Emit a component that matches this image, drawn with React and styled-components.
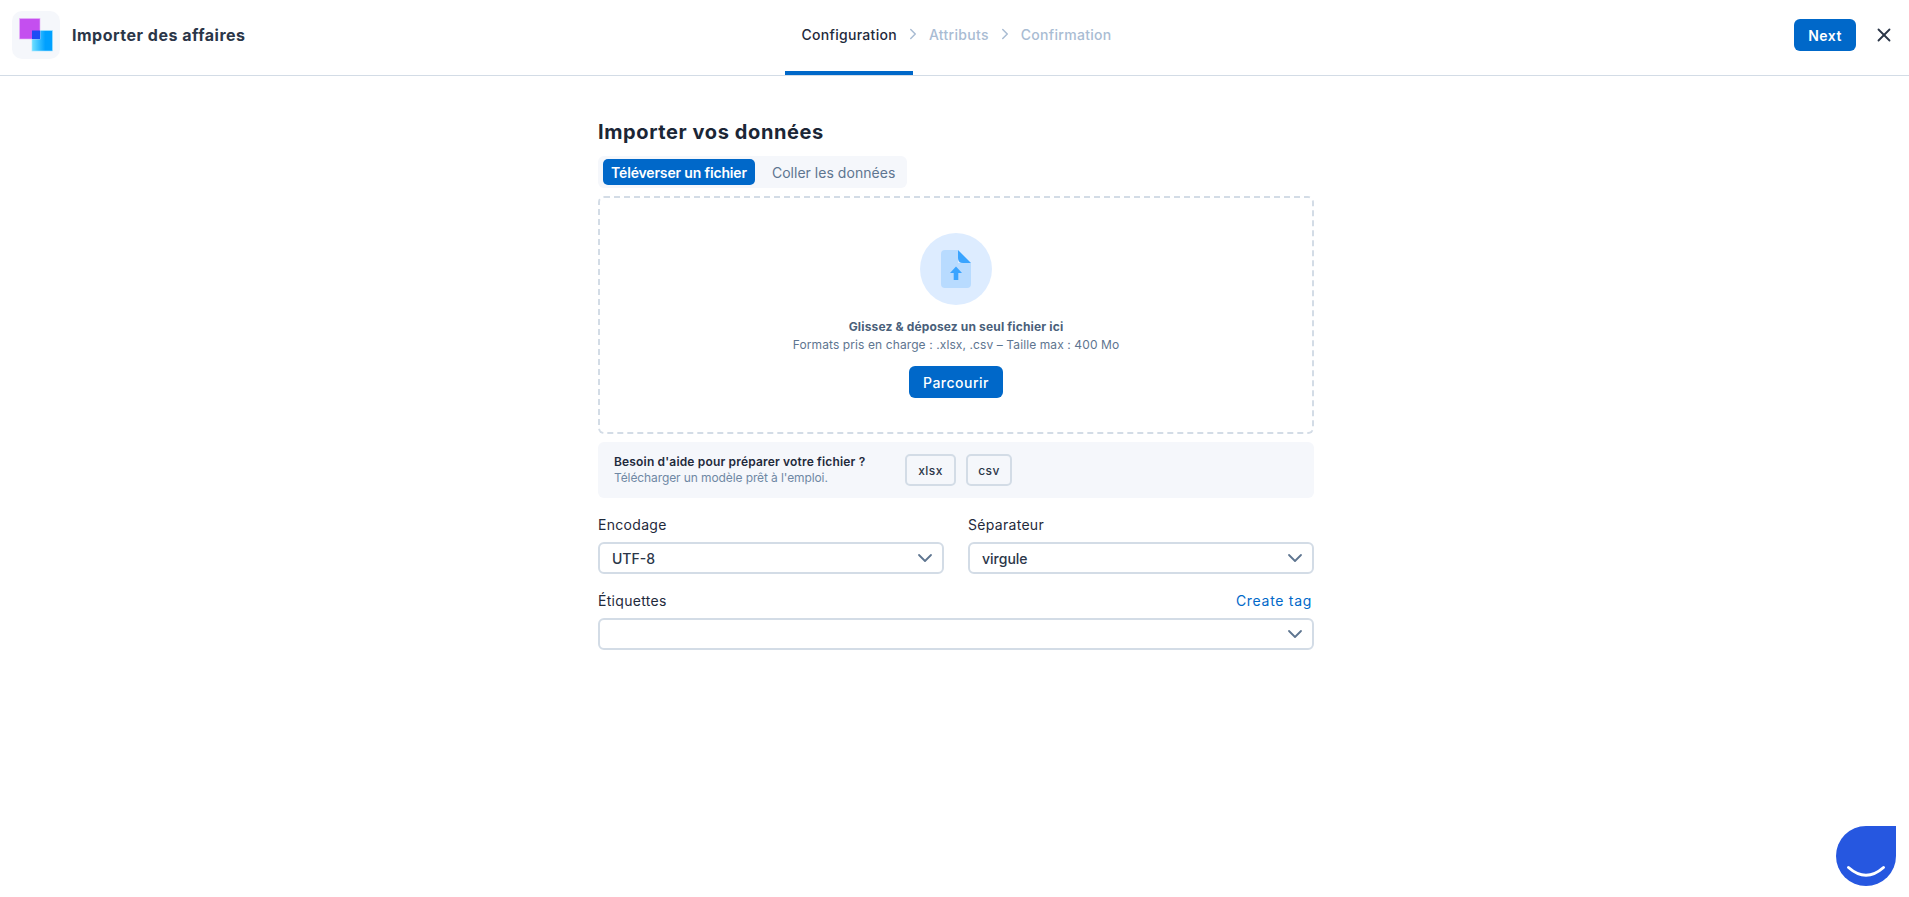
import styled, { createGlobalStyle } from "styled-components"
import { ChevronDown, ChevronRight, X } from "lucide-react"

const GlobalStyle = createGlobalStyle`
  html, body {
    margin: 0;
    padding: 0;
    background: #fff;
  }
  body {
    font-family: "Inter", "Noto Sans", sans-serif;
    color: #1f2a3c;
  }
  * {
    box-sizing: border-box;
  }
`

const Page = styled.div`
  height: 897px;
  position: relative;
  overflow: hidden;
`

const TopBar = styled.header`
  height: 76px;
  display: grid;
  grid-template-columns: 1fr auto 1fr;
  border-bottom: 1px solid #d3dce6;
  padding: 0 11px 0 12px;
`

const Brand = styled.div`
  display: flex;
  align-items: center;
  gap: 12px;
  height: 70px;
`

const LogoBox = styled.div`
  width: 48px;
  height: 48px;
  border-radius: 10px;
  background: #f5f7fb;
  display: flex;
  align-items: center;
  justify-content: center;
`

const BrandTitle = styled.h1`
  margin: 0;
  font-size: 16px;
  font-weight: 700;
  letter-spacing: 0.5px;
  color: #2b3648;
`

const Steps = styled.nav`
  display: flex;
  align-items: stretch;
  height: 75px;
  margin-left: -5px;
`

const Step = styled.div`
  display: flex;
  align-items: center;
  height: 75px;
  padding: 0 ${(p) => (p.$active ? "16px" : "8px")} 3px;
  margin-right: ${(p) => (p.$active ? "-8px" : "0")};
  font-size: 14px;
  font-weight: 500;
  letter-spacing: 0.3px;
  color: ${(p) => (p.$active ? "#1f2a3c" : "#a9bcd3")};
  border-bottom: 4px solid ${(p) => (p.$active ? "#0068c9" : "transparent")};
`

const StepArrow = styled.span`
  display: flex;
  align-items: center;
  height: 68px;
  margin: 0 -1px;
  color: #a9bcd3;
`

const TopActions = styled.div`
  display: flex;
  align-items: center;
  justify-content: flex-end;
  gap: 14px;
  height: 70px;
`

const NextButton = styled.button`
  width: 62px;
  height: 32px;
  border: 0;
  border-radius: 6px;
  background: #0068c9;
  color: #fff;
  font: 600 14px "Inter", sans-serif;
  letter-spacing: 0.5px;
`

const CloseButton = styled.button`
  width: 28px;
  height: 28px;
  padding: 0;
  border: 0;
  background: none;
  color: #2b3648;
  display: flex;
  align-items: center;
  justify-content: center;
`

const Content = styled.main`
  width: 716px;
  margin-left: 598px;
  padding-top: 43px;
`

const Heading = styled.h2`
  margin: 0 0 11px;
  font-size: 20px;
  line-height: 26px;
  font-weight: 700;
  color: #1b2636;
  letter-spacing: 0.6px;
`

const Tabs = styled.div`
  display: flex;
  width: 309px;
  height: 32px;
  padding: 3px 5px;
  gap: 9px;
  background: #f5f7fb;
  border-radius: 6px;
`

const Tab = styled.button`
  border: 0;
  border-radius: 5px;
  height: 26px;
  padding: 0 8px;
  font: ${(p) => (p.$active ? 600 : 400)} 14px "Inter", sans-serif;
  letter-spacing: ${(p) => (p.$active ? "-0.15px" : "0.03px")};
  background: ${(p) => (p.$active ? "#0068c9" : "transparent")};
  color: ${(p) => (p.$active ? "#fff" : "#5e7590")};
  white-space: nowrap;
`

const DropZone = styled.section`
  margin-top: 8px;
  height: 238px;
  border: 2px dashed #d3dce6;
  border-radius: 6px;
  display: flex;
  flex-direction: column;
  align-items: center;
  padding-top: 35px;
`

const FileCircle = styled.div`
  width: 72px;
  height: 72px;
  border-radius: 50%;
  background: #ddecff;
  display: flex;
  align-items: center;
  justify-content: center;
  margin-bottom: 13px;
`

const DropTitle = styled.p`
  margin: 0;
  font-size: 12px;
  line-height: 18px;
  font-weight: 700;
  letter-spacing: 0.15px;
  color: #4a5f7a;
`

const DropHint = styled.p`
  margin: 0 0 12px;
  font-size: 12px;
  line-height: 18px;
  letter-spacing: 0.1px;
  color: #5e7590;
`

const BrowseButton = styled.button`
  width: 94px;
  height: 32px;
  border: 0;
  border-radius: 6px;
  background: #0068c9;
  color: #fff;
  font: 500 14px "Inter", sans-serif;
  letter-spacing: 0.5px;
`

const HelpBar = styled.section`
  margin-top: 8px;
  height: 56px;
  background: #f5f7fb;
  border-radius: 6px;
  display: flex;
  align-items: center;
  padding: 0 16px;
`

const HelpText = styled.div`
  width: 291px;
`

const HelpTitle = styled.div`
  font-size: 12px;
  line-height: 16px;
  font-weight: 600;
  letter-spacing: 0.17px;
  color: #1f2a3c;
`

const HelpSub = styled.div`
  font-size: 12px;
  line-height: 16px;
  letter-spacing: -0.1px;
  color: #6f88a4;
`

const TemplateButton = styled.button`
  height: 32px;
  width: ${(p) => p.$width}px;
  margin-right: 10px;
  border: 2px solid #d3dce6;
  border-radius: 5px;
  background: #f5f7fb;
  color: #2b3648;
  font: 500 12px "Inter", sans-serif;
  letter-spacing: 0.4px;
`

const FormGrid = styled.div`
  margin-top: 16px;
  display: grid;
  grid-template-columns: 1fr 1fr;
  column-gap: 24px;
  row-gap: 16px;
`

const Field = styled.div`
  grid-column: ${(p) => (p.$wide ? "1 / -1" : "auto")};
`

const LabelRow = styled.div`
  display: flex;
  justify-content: space-between;
  align-items: center;
  height: 20px;
  margin-bottom: 8px;
  padding-right: 2px;
`

const Label = styled.label`
  font-size: 14px;
  letter-spacing: 0.3px;
  color: #1f2a3c;
`

const CreateLink = styled.a`
  font-size: 14px;
  color: #0068c9;
  letter-spacing: 0.7px;
`

const Select = styled.div`
  height: 32px;
  border: 2px solid #d3dce6;
  border-radius: 6px;
  display: flex;
  align-items: center;
  justify-content: space-between;
  padding: 0 5px 0 12px;
  font-size: 14px;
  font-weight: 500;
  color: #2b3648;
  svg {
    color: #5e7590;
  }
`

const ChatBubble = styled.div`
  position: absolute;
  right: 13px;
  bottom: 11px;
  width: 60px;
  height: 60px;
  background: #2657e0;
  border-radius: 50% 0 50% 50%;
  display: flex;
  align-items: flex-end;
  justify-content: center;
`

const ImportLogo = () => (
  <svg width="36" height="36" viewBox="0 0 36 36">
    <defs>
      <linearGradient id="logoBlue" x1="0" x2="1" y1="0" y2="0">
        <stop offset="0" stopColor="#6fe0ff" />
        <stop offset="0.65" stopColor="#00a0ff" />
      </linearGradient>
    </defs>
    <rect x="14" y="13.5" width="20.5" height="20.5" fill="url(#logoBlue)" stroke="#a4e5ff" strokeWidth="0.6" />
    <rect x="1.5" y="1.5" width="20.5" height="20.5" fill="#c44fef" stroke="#e6b4f8" strokeWidth="0.6" />
    <rect x="14" y="13.5" width="8" height="8.5" fill="#1c4cf5" />
  </svg>
)

const FileUpIcon = () => (
  <svg width="30" height="38" viewBox="0 0 30 38">
    <path d="M4 0H17V13H30V34Q30 38 26 38H4Q0 38 0 34V4Q0 0 4 0Z" fill="#b8dbff" />
    <path d="M17 0L30 13H22Q17 13 17 8Z" fill="#3aa4ff" />
    <path d="M15 16.5L21 23H17.3V30H12.7V23H9Z" fill="#3aa4ff" />
  </svg>
)

const SmileIcon = () => (
  <svg width="40" height="24" viewBox="0 0 40 24">
    <path d="M2.5 5.5Q20 21 37.5 5.5" fill="none" stroke="#fff" strokeWidth="3" strokeLinecap="round" />
  </svg>
)

const App = () => {
  return (
    <Page>
      <GlobalStyle />
      <TopBar>
        <Brand>
          <LogoBox>
            <ImportLogo />
          </LogoBox>
          <BrandTitle>Importer des affaires</BrandTitle>
        </Brand>
        <Steps>
          <Step $active>Configuration</Step>
          <StepArrow><ChevronRight size={18} strokeWidth={2} /></StepArrow>
          <Step>Attributs</Step>
          <StepArrow><ChevronRight size={18} strokeWidth={2} /></StepArrow>
          <Step>Confirmation</Step>
        </Steps>
        <TopActions>
          <NextButton>Next</NextButton>
          <CloseButton><X size={22} strokeWidth={2} /></CloseButton>
        </TopActions>
      </TopBar>

      <Content>
        <Heading>Importer vos données</Heading>
        <Tabs>
          <Tab $active>Téléverser un fichier</Tab>
          <Tab>Coller les données</Tab>
        </Tabs>

        <DropZone>
          <FileCircle>
            <FileUpIcon />
          </FileCircle>
          <DropTitle>Glissez &amp; déposez un seul fichier ici</DropTitle>
          <DropHint>Formats pris en charge : .xlsx, .csv – Taille max : 400 Mo</DropHint>
          <BrowseButton>Parcourir</BrowseButton>
        </DropZone>

        <HelpBar>
          <HelpText>
            <HelpTitle>Besoin d'aide pour préparer votre fichier ?</HelpTitle>
            <HelpSub>Télécharger un modèle prêt à l'emploi.</HelpSub>
          </HelpText>
          <TemplateButton $width={51}>xlsx</TemplateButton>
          <TemplateButton $width={46}>csv</TemplateButton>
        </HelpBar>

        <FormGrid>
          <Field>
            <LabelRow><Label>Encodage</Label></LabelRow>
            <Select>UTF-8<ChevronDown size={24} strokeWidth={1.8} /></Select>
          </Field>
          <Field>
            <LabelRow><Label>Séparateur</Label></LabelRow>
            <Select>virgule<ChevronDown size={24} strokeWidth={1.8} /></Select>
          </Field>
          <Field $wide>
            <LabelRow>
              <Label>Étiquettes</Label>
              <CreateLink>Create tag</CreateLink>
            </LabelRow>
            <Select><span /><ChevronDown size={24} strokeWidth={1.8} /></Select>
          </Field>
        </FormGrid>
      </Content>

      <ChatBubble>
        <SmileIcon />
      </ChatBubble>
    </Page>
  )
}

export default App
